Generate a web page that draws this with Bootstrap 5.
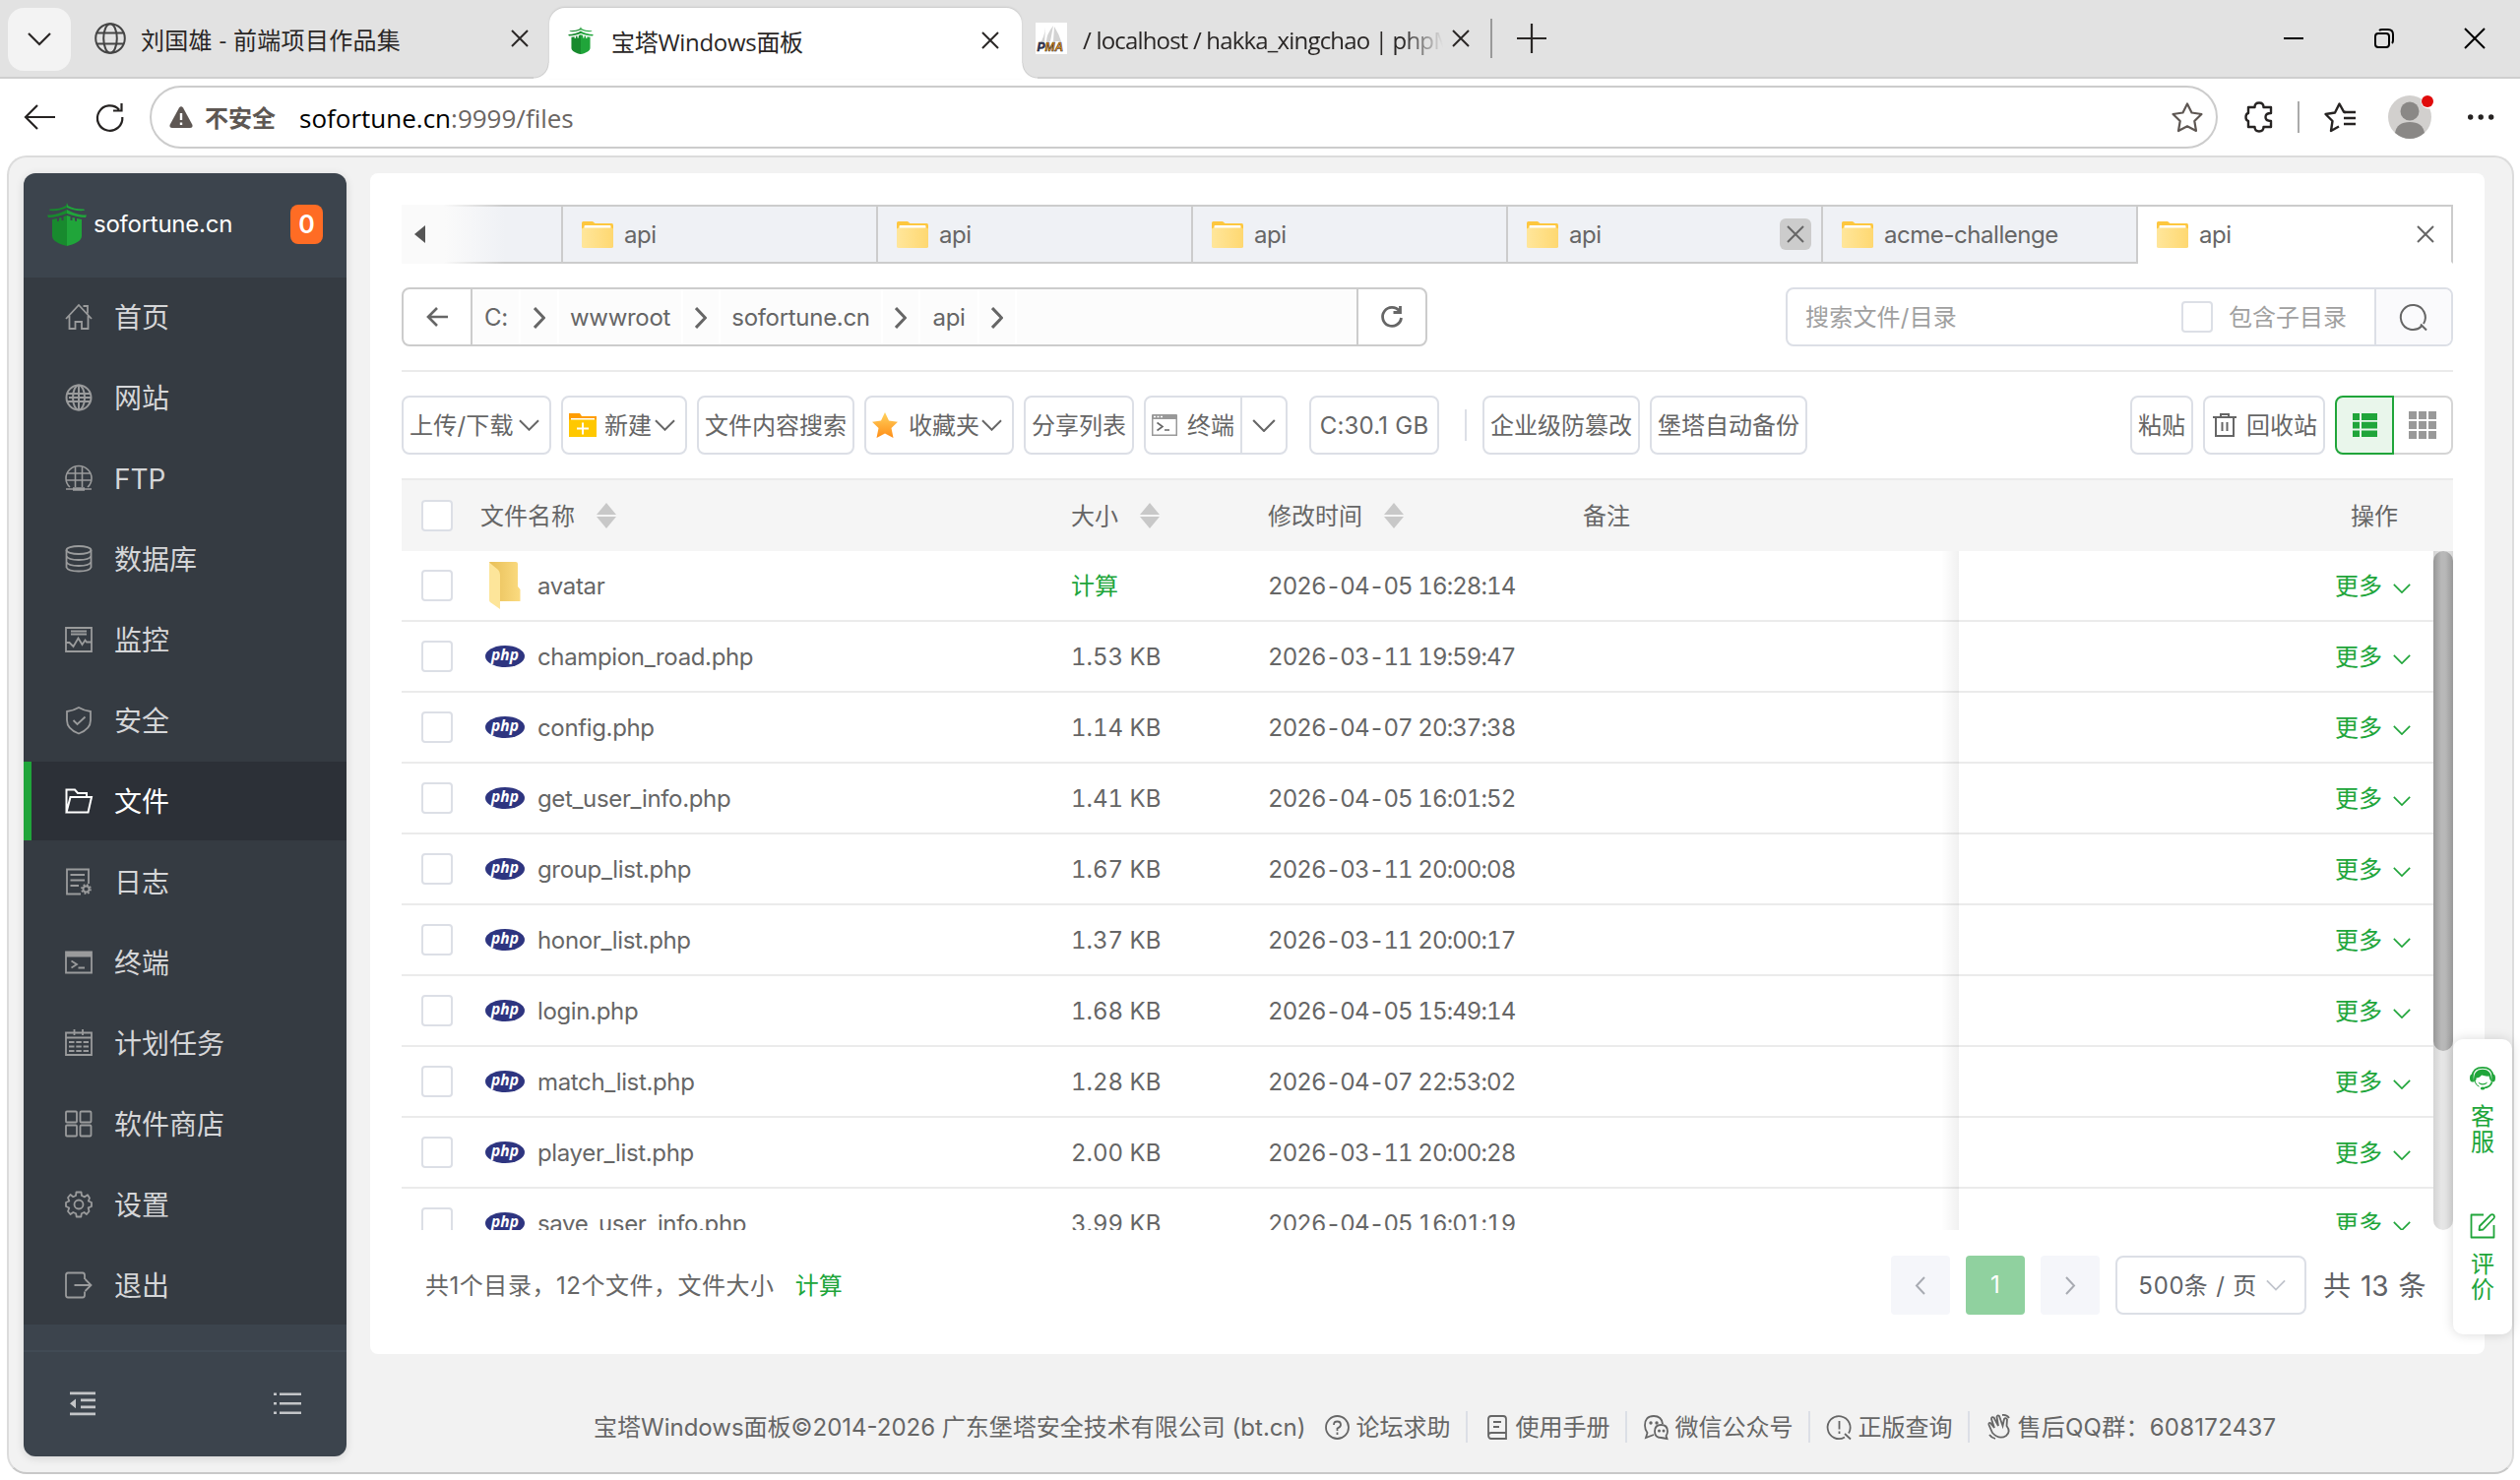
<!DOCTYPE html>
<html lang="zh-CN">
<head>
<meta charset="utf-8">
<title>宝塔Windows面板</title>
<link rel="stylesheet" href="https://cdn.jsdelivr.net/npm/bootstrap@5.3.0/dist/css/bootstrap.min.css">
<style>
:root{--bt-green:#20a53a;--ui:Inter,"Noto Sans CJK SC",sans-serif;--chrome:"Open Sans","Noto Sans CJK SC",sans-serif}
html,body{width:2560px;height:1504px;overflow:hidden;background:#fff}
body{font-family:var(--ui);font-size:24px;line-height:32px;color:#666}
svg{display:block;flex:none;overflow:visible}
.ln{fill:none;stroke:currentColor;stroke-linecap:butt}
.fx{flex:none}
.txt{white-space:nowrap;flex:none;padding-top:2px}
/* browser window */
.strip{height:80px;background:#e2e2e2;font-family:var(--chrome);color:#2a2726}
.strip .txt{padding-top:4px}
.strip .edge{height:80px;border-bottom:2px solid #cfcfcf}
.menu-btn{width:64px;height:64px;background:#f3f3f3;border-radius:16px;margin:8px 24px 0 8px}
.tab-a{width:462px;padding-right:21px}
.tab-a .txt{letter-spacing:.3px;margin-left:15px}
.tab-b{width:480px;height:72px;margin-top:8px;background:#fff;border-radius:16px 16px 0 0;position:relative;padding:0 23px 6px 19px;box-shadow:0 -1px 2px #c8c8c8}
.tab-b .txt{letter-spacing:-.3px;margin-left:18px;padding-top:3px}
.tab-b::before,.tab-b::after{content:"";position:absolute;bottom:0;width:16px;height:16px}
.tab-b::before{left:-16px;background:radial-gradient(circle at 0 0,#e2e2e2 14px,#cfcfcf 15px,#fff 16px)}
.tab-b::after{right:-16px;background:radial-gradient(circle at 100% 0,#e2e2e2 14px,#cfcfcf 15px,#fff 16px)}
.tab-c{width:1522px;padding-left:14px}
.fade-title{width:366px;overflow:hidden;margin-left:16px;letter-spacing:-.82px;-webkit-mask-image:linear-gradient(90deg,#000 325px,transparent 366px);mask-image:linear-gradient(90deg,#000 325px,transparent 366px)}
.tab-sep{width:2px;height:40px;background:#999;margin:0 25px 0 21px}
.winbtns{gap:72px;margin-right:36px;color:#000}
.tbar{height:78px;background:#fff;color:#262322;padding-left:24px}
.addr{width:2101px;height:64px;border:2px solid #ccc;border-radius:32px;padding:0 13px 0 18px;margin-left:26px;font-family:var(--chrome)}
.addr-url{margin-left:24px;font-size:26px;color:#6b6663}
.unsafe{color:#5e5753;font-weight:600;margin-left:12px}
.vbar{width:2px;height:32px;background:#aaa;margin:0 25px}
.page-frame{width:2547px;height:1340px;margin-left:7px;background:#f2f2f2;border:2px solid #dcdcdc;border-bottom-color:#c8c8c8;border-radius:20px;position:relative;padding:16px 0 0 15px}
/* sidebar */
.side{width:328px;height:1304px;background:#3c444d;border-radius:12px;overflow:hidden;box-shadow:0 2px 10px rgba(0,0,0,.12)}
.side-head{height:106px;padding:0 24px 2px;color:#fff}
.side-head .txt{letter-spacing:-.25px;padding:0}
.side-badge{width:33px;height:40px;background:#ff6c24;border-radius:8px;font-weight:600;font-size:25px;color:#fff}
.side-menu{background:#353b42;height:1064px}
.side-menu a{height:80px;margin-bottom:2px;padding:2px 0 0 42px;font-size:28px;color:#d5d6d8;text-decoration:none;gap:22px}
.side-menu svg{color:#9a9b9c;margin-top:-2px}
.side-menu a.on{background:#2c3037;color:#fff;border-left:8px solid var(--bt-green);padding-left:34px}
.side-menu a.on svg{color:#fff}
.side-foot{margin-top:26px;height:108px;border-top:2px solid #414b55;color:#c3c5c8;padding:0 46px 2px 46px}
/* panel */
.panel{width:2148px;height:1200px;background:#fff;border-radius:8px;margin-left:24px;padding:32px 32px 0}
.ftabs{height:60px}
.ftab{width:320px;border:2px solid #ccc;border-left-width:0;background:#eff1f5;padding:0 10px 0 19px}
.ftab .txt{margin-left:11px;letter-spacing:-.45px}
.ftab.first{width:164px;padding-left:13px;background:linear-gradient(90deg,#fafafa 44px,#eff1f5 105px);border-image:linear-gradient(90deg,#fafafa 44px,#ccc 105px) 2}
.ftab.cur{background:#fff;border-bottom-color:transparent}
.xbox{width:32px;height:32px;border-radius:6px;background:#ccc}
.pathbar{width:1042px;height:60px;border:2px solid #ccc;border-radius:8px;overflow:hidden}
.pathbar .seg{height:56px;background:#fcfcfc;border-right:2px solid #fff;letter-spacing:-.3px;padding-top:2px}
.pbtn{width:70px;height:56px}
.search{width:678px;height:60px;border:2px solid #dcdfe6;border-radius:8px;overflow:hidden;color:#a0a0a0;padding-left:18px}
.search .go{width:78px;height:56px;background:#fafafc;border-left:2px solid #dcdfe6;color:#666;margin-left:28px}
.box{width:32px;height:32px;border:2px solid #dcdfe6;border-radius:4px;background:#fff}
.rule{height:2px;background:#ebebeb;margin:24px 0}
.tools{height:60px}
.tb{height:60px;border:2px solid #dcdfe6;border-radius:8px;background:#fff;margin-right:10px;padding:0 6px}
.tline{width:2px;height:32px;background:#dcdfe6;margin:0 16px}
.viewsw{width:60px;height:60px}
.viewsw.l{border:2px solid var(--bt-green);background:#e9f6eb;border-radius:8px 0 0 8px;color:var(--bt-green)}
.viewsw.r{border:2px solid #d5d5d5;border-left:0;border-radius:0 8px 8px 0;color:#999}
.thead-row{height:74px;background:#f5f5f5;border-top:2px solid #ebebeb;margin-top:24px;padding-left:20px}
.sorter{color:#c8c8c8;margin-left:22px}
.scrollbox{height:690px;overflow:hidden}
.rowset{width:2064px}
.frow{height:72px;border-bottom:2px solid #ebebeb;padding-left:20px}
.c-name{width:600px;margin-left:28px}
.c-name .fname{letter-spacing:-.35px}
.c-size{width:200px;font-feature-settings:"tnum"}
.c-time{width:684px;font-feature-settings:"tnum";letter-spacing:-.89px}
.c-shade{width:18px;height:72px;background:linear-gradient(90deg,rgba(0,0,0,0),rgba(0,0,0,.055))}
.c-op{width:482px;padding-right:23px}
.c-op svg{margin:6px 0 0 11px}
.grn{color:var(--bt-green)}
.ico-cell{width:40px;margin:0 13px 0 5px}
.track{width:20px;background:linear-gradient(90deg,#d4d4d4,#e6e6e6 40%,#e6e6e6 60%,#d8d8d8);border-radius:0 0 10px 10px}
.thumb{height:508px;border-radius:10px;background:linear-gradient(90deg,#969696,#b8b8b8 40%,#b8b8b8 60%,#999)}
.foot-row{padding:26px 26px 0 24px}
.summary{letter-spacing:.53px}
.pg{width:60px;height:60px;background:#f5f6fa;border-radius:4px;margin-right:16px;color:#a8abb2}
.pg.on{background:#90d19f;color:#fff}
.psel{width:194px;height:60px;border:2px solid #dcdfe6;border-radius:8px;padding:0 19px 0 21px;color:#606266;word-spacing:2px;font-feature-settings:"tnum"}
.total{font-size:28px;width:106px;margin-left:17px;color:#606266;word-spacing:2px}
.copy{margin-top:54px;padding-left:251px;height:40px}
.copy .sep{width:2px;height:32px;background:#dcdfe6}
.helper{position:absolute;right:0;top:896px;width:60px;height:300px;background:#fff;border-radius:10px;box-shadow:0 0 12px rgba(0,0,0,.15);color:var(--bt-green)}
.helper .w{line-height:26px;width:24px;text-align:center}
</style>
</head>
<body>
<svg width="0" height="0" class="position-absolute">
<defs>
<linearGradient id="gf" x1="0" x2="1"><stop offset="0" stop-color="#ffe69b"/><stop offset="1" stop-color="#fed871"/></linearGradient>
<linearGradient id="gs" x1="0" x2="0" y1="0" y2="1"><stop offset="0" stop-color="#ffd25e"/><stop offset="1" stop-color="#ff8e17"/></linearGradient>
<linearGradient id="gd" x1="0" x2="1"><stop offset="0" stop-color="#e8bf58"/><stop offset="1" stop-color="#fbdb80"/></linearGradient>
<symbol id="x" viewBox="0 0 18 18"><path class="ln" stroke-width="2" d="M1 1 17 17M17 1 1 17"/></symbol>
<symbol id="dn" viewBox="0 0 22 12"><path class="ln" stroke-width="2" d="M1 1 11 11 21 1"/></symbol>
<symbol id="rt" viewBox="0 0 12 22"><path class="ln" stroke-width="3" d="M1 1 10.500 11 1 21"/></symbol>
<symbol id="tower" viewBox="0 0 40 44">
<path fill="#188a2e" d="M20 0V5C15 7.500 9 8.500 2.500 8 2 7.500 2 6.800 3 6.500 9 6.600 15 5.500 19 3ZM20 7V11C14 13 8 15 1 15L0 12.500C8 12.500 14 10.500 20 7ZM5 17 10 16V19L12 18.500V15.500L14.500 15V18H16.500V14L20 13V44C13 42.500 5 39 5 34Z"/>
<path fill="#20a53a" d="M20 0V5C25 7.500 31 8.500 37.500 8 38 7.500 38 6.800 37 6.500 31 6.600 25 5.500 21 3ZM20 7V11C26 13 32 15 39 15L40 12.500C32 12.500 26 10.500 20 7ZM35 17 30 16V19L28 18.500V15.500L25.500 15V18H23.500V14L20 13V44C27 42.500 35 39 35 34Z"/></symbol>
<symbol id="fold" viewBox="0 0 32 27"><path fill="#fdc73f" d="M1.500 0H11L13.500 2H30.500Q32 2 32 4V20H0V1.500Q0 0 1.500 0Z"/><rect x="2.500" y="4" width="27" height="8" rx="1" fill="#fff"/><path fill="url(#gf)" d="M0 8Q0 6.500 2 6.500H30Q32 6.500 32 8V25.500Q32 27 30 27H2Q0 27 0 25.500Z"/></symbol>
<symbol id="bigfold" viewBox="0 0 32 48"><path fill="url(#gd)" d="M0 0H27Q29 0 29 2V25L31.500 28V40H9L6 20Z"/><path fill="#fde59a" d="M0 0.500 9 8Q11 10 11 13V48L1 41Q0 40 0 39Z"/></symbol>
<symbol id="sort" viewBox="0 0 20 26"><path fill="currentColor" d="M10 0 20 12H0ZM0 14H20L10 26Z"/></symbol>
<symbol id="glb" viewBox="0 0 32 32"><g class="ln" stroke-width="2"><circle cx="16" cy="16" r="14.800"/><ellipse cx="16" cy="16" rx="6.800" ry="14.800"/><path d="M3 10.500H29M3 21.500H29"/></g></symbol>
</defs></svg>

<div class="strip d-flex">
  <div class="edge d-flex fx">
    <div class="menu-btn d-flex align-items-center justify-content-center"><svg width="24" height="12"><path class="ln" stroke-width="2.200" d="M1 0 12 11 23 0"/></svg></div>
    <div class="tab-a d-flex align-items-center"><svg width="32" height="32" style="color:#444"><use href="#glb"/></svg><span class="txt me-auto">刘国雄 - 前端项目作品集</span><svg width="18" height="18"><use href="#x"/></svg></div>
  </div>
  <div class="tab-b d-flex align-items-center fx"><svg width="26" height="28"><use href="#tower"/></svg><span class="txt me-auto">宝塔Windows面板</span><svg width="18" height="18"><use href="#x"/></svg></div>
  <div class="edge tab-c d-flex align-items-center fx">
    <svg width="32" height="32"><rect width="32" height="32" fill="#fff"/><path fill="#d3d3d3" d="M10 5Q9 15 4 22H9ZM18 3Q11 12 11 19H15ZM19 4Q24 12 26 19H18Z"/><text x="1.500" y="29" font-family="Liberation Sans" font-weight="700" font-style="italic" font-size="12" fill="#2f3560" stroke="#222" stroke-width=".5">P<tspan fill="#f29111">MA</tspan></text></svg>
    <div class="fade-title txt">/ localhost / hakka_xingchao | phpMyAdmin</div>
    <svg width="18" height="18" style="margin-left:9px"><use href="#x"/></svg>
    <div class="tab-sep"></div>
    <svg width="30" height="30"><path class="ln" stroke-width="2.200" d="M15 0V30M0 15H30"/></svg>
    <div class="winbtns ms-auto d-flex align-items-center">
      <svg width="20" height="2"><path fill="#000" d="M0 0H20V2H0Z"/></svg>
      <svg width="20" height="20"><g class="ln" stroke-width="2"><rect x="1" y="5" width="14" height="14" rx="3"/><path d="M5 2Q6 1 8 1H14Q19 1 19 6V12Q19 14 18 15"/></g></svg>
      <svg width="20" height="20"><path class="ln" stroke-width="2" d="M0 0 20 20M20 0 0 20"/></svg>
    </div>
  </div>
</div>

<div class="tbar d-flex align-items-center">
  <svg width="32" height="26"><path class="ln" stroke-width="2.200" d="M32 13H2M14 1 2 13 14 25"/></svg>
  <svg width="29" height="28" style="margin-left:41px"><path class="ln" stroke-width="2.200" d="M24 6.500A12.700 12.700 0 1 0 27.300 14M26.500 0V7.500H18"/></svg>
  <div class="addr d-flex align-items-center fx">
    <svg width="24" height="22" style="color:#5e5753"><path fill="currentColor" d="M10 1.500Q12-1 14 1.500L23.500 19Q24 22 21 22H3Q0 22 .500 19Z"/><path stroke="#fff" stroke-width="2.400" d="M12 7V14M12 16.500V19"/></svg>
    <span class="txt unsafe">不安全</span>
    <span class="txt addr-url"><span class="text-black">sofortune.cn</span>:9999/files</span>
    <svg class="ms-auto" width="32" height="30" style="color:#5e5753"><path class="ln" stroke-width="2.200" stroke-linejoin="round" d="M16 1.500 20.500 10.500 30.500 12 23.300 19 25 29 16 24.300 7 29 8.700 19 1.500 12 11.500 10.500Z"/></svg>
  </div>
  <svg width="29" height="32" style="margin-left:27px"><path class="ln" stroke-width="2.400" stroke-linejoin="round" d="M4 6H10.500Q10.500 1.500 15 1.500 19.500 1.500 19.500 6H27V12Q21.500 12 21.500 16 21.500 20 27 20V26H19.500Q19.500 30.500 15 30.500 10.500 30.500 10.500 26H4V20Q1.500 19.500 1.500 16 1.500 12.500 4 12Z"/></svg>
  <div class="vbar"></div>
  <svg width="32" height="30"><g class="ln" stroke-width="2.400" stroke-linejoin="round"><path d="M22 10 20 9.700 15.500 1.500 11 10.500 1.500 12 8.500 19 7 29 15 24.500"/><path d="M20 10H32M20 16H32M20 22H32"/></g></svg>
  <svg width="48" height="46" style="margin-left:32px"><circle cx="23" cy="23" r="22" fill="#d2d0ce"/><circle cx="23" cy="17" r="9.500" fill="#8a8886"/><path fill="#8a8886" d="M8 39Q10 28 23 28 36 28 38 39 31 45 23 45 15 45 8 39Z"/><circle cx="42" cy="7" r="7.500" fill="#fff"/><circle cx="41" cy="7" r="6" fill="#e00b0b"/></svg>
  <svg width="28" height="6" style="margin-left:34px"><path fill="currentColor" d="M0 3a2.700 2.700 0 1 0 5.400 0 2.700 2.700 0 1 0-5.400 0M10.500 3a2.700 2.700 0 1 0 5.400 0 2.700 2.700 0 1 0-5.400 0M21 3a2.700 2.700 0 1 0 5.400 0 2.700 2.700 0 1 0-5.400 0"/></svg>
</div>

<div class="page-frame d-flex">
  <nav class="side fx">
    <div class="side-head d-flex align-items-center"><svg width="40" height="44"><use href="#tower"/></svg><span class="txt me-auto" style="margin-left:7px">sofortune.cn</span><span class="side-badge d-flex align-items-center justify-content-center">0</span></div>
    <div class="side-menu">
      <a class="d-flex align-items-center"><svg width="28" height="28"><path class="ln" stroke-width="1.800" d="M1 16 14 2 27 16M18.500 3H23V10.500M4.500 13V26H10.500V19H17V26H23.500V13"/></svg>首页</a>
      <a class="d-flex align-items-center"><svg width="28" height="28"><g class="ln" stroke-width="2"><circle cx="14" cy="14" r="12.500"/><ellipse cx="14" cy="14" rx="6" ry="12.500"/><path d="M14 1V27M2 10H26M2 18H26M4 14H26"/></g></svg>网站</a>
      <a class="d-flex align-items-center"><svg width="28" height="28"><g class="ln" stroke-width="1.600"><path d="M5 23A13 12.500 0 1 1 23 23M10.500 23V2M17.500 23V2M2 9H26M1 16H27M1 25H27"/><path stroke-width="3.500" d="M8 25H20"/></g></svg>FTP</a>
      <a class="d-flex align-items-center"><svg width="28" height="28"><g class="ln" stroke-width="1.800"><ellipse cx="14" cy="5" rx="12.500" ry="4"/><path d="M1.500 5V22.500Q3 26.500 14 26.500 25 26.500 26.500 22.500V5M1.500 11Q3 15 14 15 25 15 26.500 11M1.500 17Q3 21 14 21 25 21 26.500 17"/></g></svg>数据库</a>
      <a class="d-flex align-items-center"><svg width="28" height="28"><g class="ln" stroke-width="1.800"><path d="M1 2H27V26H1ZM6 5.500H22M6 8.500H22"/><path d="M1 17H4.500L8.500 21 13.500 12.500 17.500 19 20.500 14.500 22 16.500H27"/></g></svg>监控</a>
      <a class="d-flex align-items-center"><svg width="28" height="28"><path class="ln" stroke-width="1.800" d="M14 1Q19 4 26 5V14Q26 23 14 27.500 2 23 2 14V5Q9 4 14 1ZM8.500 14 12.500 18 20.500 10.500"/></svg>安全</a>
      <a class="d-flex align-items-center on"><svg width="28" height="28"><path class="ln" stroke-width="2" d="M1.500 25.500V2.500H10L13 6H22V10M1.500 25.500 5.500 10H27L23.500 25.500Z"/></svg>文件</a>
      <a class="d-flex align-items-center"><svg width="28" height="28"><g class="ln" stroke-width="1.800"><path d="M16 26.500H2V1.500H24V16M5.500 7H20M5.500 12.500H20M5.500 18H14"/><circle cx="21.500" cy="21.500" r="3"/><circle cx="21.500" cy="21.500" r="4.500" stroke-dasharray="1.800 1.734"/></g></svg>日志</a>
      <a class="d-flex align-items-center"><svg width="28" height="28"><g class="ln" stroke-width="1.800"><path d="M1 3.500H27V24.500H1Z"/><path stroke-width="5" d="M1 6H27"/><path d="M6.500 12.500 12 16 6.500 19.500M13.500 19.500H20"/></g></svg>终端</a>
      <a class="d-flex align-items-center"><svg width="28" height="28"><g class="ln" stroke-width="1.800"><path d="M1 3.500H27V26H1ZM9.500 0V6M18 0V6M1 8.500H27"/><path stroke-dasharray="5.500 1.800" d="M4 13H24M4 17.500H24M4 22H24"/></g></svg>计划任务</a>
      <a class="d-flex align-items-center"><svg width="28" height="28"><g class="ln" stroke-width="1.800"><rect x="1" y="1.500" width="11" height="11" rx="1"/><rect x="15.500" y="1.500" width="11" height="11" rx="1"/><rect x="1" y="15.500" width="11" height="11" rx="1"/><rect x="15.500" y="15.500" width="11" height="11" rx="1"/></g></svg>软件商店</a>
      <a class="d-flex align-items-center"><svg width="28" height="28"><g class="ln" stroke-width="1.800"><circle cx="14" cy="14" r="4.500"/><path stroke-linejoin="round" d="M11.500 1.500H16.500L17 5 20 6.300 23 4.200 25 7.500 23.800 10.500 27 12V16L23.600 17.300 24.500 21 22 24 19.500 22 16.800 23.300 16.300 26.500H11.700L11.200 23.300 8.300 22 5.500 24 3 21 4.300 17.500 1 16V12L4.300 10.500 3 7 5.500 4 8.300 6.200 11 5Z"/></g></svg>设置</a>
      <a class="d-flex align-items-center"><svg width="28" height="28"><path class="ln" stroke-width="1.800" d="M20 8V4Q20 1.500 18 1.500H3Q1 1.500 1 4V24Q1 26.500 3 26.500H18Q20 26.500 20 24V20.500M9.500 14H26M20.500 8 26.500 14 20.500 20"/></svg>退出</a>
    </div>
    <div class="side-foot d-flex align-items-center justify-content-between">
      <svg width="28" height="26"><path fill="currentColor" d="M1 1.500H27V4.200H1ZM12 8.500H27V11.200H12ZM12 15.500H27V18.200H12ZM1 22.500H27V25.200H1ZM1 13.300 7 8.500V18.200Z"/></svg>
      <svg width="28" height="24"><path fill="currentColor" d="M0 1.500H3V4H0ZM6 1.500H28V4H6ZM0 11H3V13.500H0ZM6 11H28V13.500H6ZM0 20.500H3V23H0ZM6 20.500H28V23H6Z"/></svg>
    </div>
  </nav>

  <div class="fx">
  <main class="panel">
    <div class="ftabs d-flex">
      <div class="ftab first d-flex align-items-center fx"><svg width="11" height="18"><path fill="#555" d="M11 0V18L0 9Z"/></svg></div>
      <div class="ftab d-flex align-items-center fx"><svg width="32" height="27"><use href="#fold"/></svg><span class="txt">api</span></div>
      <div class="ftab d-flex align-items-center fx"><svg width="32" height="27"><use href="#fold"/></svg><span class="txt">api</span></div>
      <div class="ftab d-flex align-items-center fx"><svg width="32" height="27"><use href="#fold"/></svg><span class="txt">api</span></div>
      <div class="ftab d-flex align-items-center fx"><svg width="32" height="27"><use href="#fold"/></svg><span class="txt me-auto">api</span><span class="xbox d-flex align-items-center justify-content-center"><svg width="18" height="18"><use href="#x"/></svg></span></div>
      <div class="ftab d-flex align-items-center fx"><svg width="32" height="27"><use href="#fold"/></svg><span class="txt">acme-challenge</span></div>
      <div class="ftab cur d-flex align-items-center fx"><svg width="32" height="27"><use href="#fold"/></svg><span class="txt me-auto">api</span><svg width="18" height="18" style="margin-right:7px"><use href="#x"/></svg></div>
    </div>

    <div class="d-flex justify-content-between" style="margin-top:24px">
      <div class="pathbar d-flex align-items-center">
        <div class="pbtn d-flex align-items-center justify-content-center fx" style="border-right:2px solid #ccc"><svg width="22" height="20"><path class="ln" stroke-width="2.600" d="M22 10H2M11 1 2 10 11 19"/></svg></div>
        <div class="seg fx d-flex align-items-center" style="width:49px;padding-left:12px">C:</div>
        <div class="seg fx d-flex align-items-center justify-content-center" style="width:39px"><svg width="12" height="22"><use href="#rt"/></svg></div>
        <div class="seg fx d-flex align-items-center justify-content-center" style="width:126px">wwwroot</div>
        <div class="seg fx d-flex align-items-center justify-content-center" style="width:38px"><svg width="12" height="22"><use href="#rt"/></svg></div>
        <div class="seg fx d-flex align-items-center justify-content-center" style="width:165px">sofortune.cn</div>
        <div class="seg fx d-flex align-items-center justify-content-center" style="width:38px"><svg width="12" height="22"><use href="#rt"/></svg></div>
        <div class="seg fx d-flex align-items-center justify-content-center" style="width:60px">api</div>
        <div class="seg fx d-flex align-items-center justify-content-center" style="width:38px"><svg width="12" height="22"><use href="#rt"/></svg></div>
        <div class="seg flex-grow-1 border-0"></div>
        <div class="pbtn d-flex align-items-center justify-content-center fx" style="border-left:2px solid #ccc"><svg width="24" height="24"><path class="ln" stroke-width="2.800" d="M19.500 6A9.500 9.500 0 1 0 21.500 13M20.500 1V7.500H13.500"/></svg></div>
      </div>
      <div class="search d-flex align-items-center">
        <span class="txt me-auto" style="letter-spacing:.2px">搜索文件/目录</span>
        <span class="box fx"></span><span class="txt" style="margin-left:16px">包含子目录</span>
        <div class="go d-flex align-items-center justify-content-center fx"><svg width="28" height="28"><path class="ln" stroke-width="2" d="M22 23.500A12.500 12.500 0 1 1 24 21M21 21.500 27 27.500"/></svg></div>
      </div>
    </div>
    <div class="rule"></div>

    <div class="tools d-flex align-items-center">
      <div class="tb fx d-flex align-items-center" style="width:152px"><span class="txt" style="letter-spacing:.2px">上传/下载</span><svg width="21" height="12" style="margin-left:5px"><use href="#dn"/></svg></div>
      <div class="tb fx d-flex align-items-center" style="width:128px"><svg width="28" height="24"><path fill="#ff9d00" d="M0 0H11L13 3H28V9H0Z"/><path fill="#fff" d="M2 5H26V7H2Z"/><path fill="#ffc800" d="M0 6.500H28V24H0Z"/><path stroke="#fff" stroke-width="2" d="M14 9.500V21.500M8 15.500H20"/></svg><span class="txt" style="margin-left:8px">新建</span><svg width="21" height="12" style="margin-left:3px"><use href="#dn"/></svg></div>
      <div class="tb fx d-flex align-items-center" style="width:160px"><span class="txt">文件内容搜索</span></div>
      <div class="tb fx d-flex align-items-center" style="width:152px"><svg width="26" height="26"><path fill="url(#gs)" d="M13 0 17 8.500 26 9.800 19.500 16 21.500 26 13 21.500 4.500 26 6.500 16 0 9.800 9 8.500Z"/></svg><span class="txt" style="margin-left:11px">收藏夹</span><svg width="21" height="12" style="margin-left:2px"><use href="#dn"/></svg></div>
      <div class="tb fx d-flex align-items-center" style="width:112px"><span class="txt">分享列表</span></div>
      <div class="tb fx d-flex align-items-center" style="width:146px;margin-right:22px"><svg width="26" height="22"><path fill="#999" d="M0 1Q0 0 1 0H25Q26 0 26 1V22H0ZM1.500 5V20.500H24.500V5Z" fill-rule="evenodd"/><path class="ln" stroke="#999" stroke-width="1.600" d="M5.500 8.500 11 12.500 5.500 16.500M13 16H18"/><path stroke="#fff" stroke-width="1.500" d="M2 2.500H4M5.500 2.500H7.500M9 2.500H11"/></svg><span class="txt" style="margin:0 6px 0 10px">终端</span><div style="width:2px;height:56px;background:#dcdfe6"></div><svg width="24" height="13" style="margin-left:10px"><use href="#dn"/></svg></div>
      <div class="tb fx d-flex align-items-center justify-content-center" style="width:132px;padding:0"><span class="txt" style="letter-spacing:.2px">C:30.1 GB</span></div>
      <div class="tline"></div>
      <div class="tb fx d-flex align-items-center" style="width:160px"><span class="txt">企业级防篡改</span></div>
      <div class="tb fx d-flex align-items-center" style="width:160px"><span class="txt">堡塔自动备份</span></div>
      <div class="tb fx d-flex align-items-center ms-auto" style="width:64px"><span class="txt">粘贴</span></div>
      <div class="tb fx d-flex align-items-center" style="width:124px;padding-left:8px"><svg width="24" height="24"><path class="ln" stroke-width="2" d="M0 4H24M8 4V1H16V4M3 4V23H21V4M9.500 9V18M14.500 9V18"/></svg><span class="txt" style="margin-left:10px">回收站</span></div>
      <div class="viewsw l d-flex align-items-center justify-content-center fx"><svg width="25" height="24"><path fill="currentColor" d="M0 0H7V7H0ZM9 0H25V7H9ZM0 8.700H7V15.500H0ZM9 8.700H25V15.500H9ZM0 17.500H7V24H0ZM9 17.500H25V24H9Z"/></svg></div>
      <div class="viewsw r d-flex align-items-center justify-content-center fx"><svg width="28" height="28"><path fill="currentColor" d="M0 0H8V8H0ZM10 0H18V8H10ZM20 0H28V8H20ZM0 10H8V18H0ZM10 10H18V18H10ZM20 10H28V18H20ZM0 20H8V28H0ZM10 20H18V28H10ZM20 20H28V28H20Z"/></svg></div>
    </div>

    <div class="thead-row d-flex align-items-center">
      <span class="box fx"></span>
      <div class="c-name fx d-flex align-items-center"><span class="txt">文件名称</span><svg class="sorter" width="20" height="26"><use href="#sort"/></svg></div>
      <div class="c-size fx d-flex align-items-center"><span class="txt">大小</span><svg class="sorter" width="20" height="26"><use href="#sort"/></svg></div>
      <div class="fx d-flex align-items-center" style="width:320px"><span class="txt">修改时间</span><svg class="sorter" width="20" height="26"><use href="#sort"/></svg></div>
      <span class="txt">备注</span><span class="txt ms-auto" style="margin-right:56px">操作</span>
    </div>
    <div class="scrollbox d-flex">
      <div class="rowset fx" id="rows"></div>
      <div class="track fx"><div class="thumb"></div></div>
    </div>

    <div class="foot-row d-flex align-items-center">
      <span class="txt summary">共1个目录，12个文件，文件大小</span><span class="txt grn me-auto" style="margin-left:21px">计算</span>
      <div class="pg fx d-flex align-items-center justify-content-center"><svg width="10" height="19"><path class="ln" stroke-width="2" d="M9 1 1 9.500 9 18"/></svg></div>
      <div class="pg on fx d-flex align-items-center justify-content-center">1</div>
      <div class="pg fx d-flex align-items-center justify-content-center"><svg width="10" height="19"><path class="ln" stroke-width="2" d="M1 1 9 9.500 1 18"/></svg></div>
      <div class="psel fx d-flex align-items-center justify-content-between"><span class="txt">500条 / 页</span><svg width="20" height="12" style="color:#c0c4cc"><use href="#dn"/></svg></div>
      <span class="txt total">共 13 条</span>
    </div>
  </main>
  <footer class="copy d-flex align-items-center">
    <span class="txt">宝塔Windows面板©2014-2026 广东堡塔安全技术有限公司 (bt.cn)</span>
    <svg width="25" height="25" style="margin:0 6px 0 20px"><g class="ln" stroke-width="1.800"><circle cx="12.500" cy="12.500" r="11.500"/><path d="M9 10Q9 6.500 12.500 6.500 16 6.500 16 10 16 12 12.500 13.500V16M12.500 17.500V20"/></g></svg><span class="txt">论坛求助</span>
    <div class="sep" style="margin:0 20px 0 16px"></div>
    <svg width="20" height="25" style="margin-right:8px"><path class="ln" stroke-width="1.800" d="M1 20V4Q1 1 4 1H16Q19 1 19 4V24H4Q1 24 1 20.500 1 18 4 18H19M6 7H14M6 12H12"/></svg><span class="txt">使用手册</span>
    <div class="sep" style="margin:0 17px 0 16px"></div>
    <svg width="25" height="25" style="margin-right:6px"><g class="ln" stroke-width="1.800"><path d="M10 20 2 23 3.500 18Q1 15 1 10.500 1 1 10 1 18 1 19 9"/><path d="M17.500 10Q24 10 24 16.500 24 19 22.500 21L23.500 24 17.500 23Q11 23 11 16.500 11 10 17.500 10Z"/></g><g fill="currentColor"><circle cx="7" cy="8" r="1.700"/><circle cx="13" cy="8" r="1.700"/><circle cx="15.500" cy="16" r="1.500"/><circle cx="20" cy="16" r="1.500"/></g></svg><span class="txt">微信公众号</span>
    <div class="sep" style="margin:0 17px 0 16px"></div>
    <svg width="25" height="25" style="margin-right:6px"><path class="ln" stroke-width="1.800" d="M18 22.500A11.500 11.500 0 1 1 22 18.500M18 19 24 24.500M12.500 6V14.500M12.500 16.500V19"/></svg><span class="txt">正版查询</span>
    <div class="sep" style="margin:0 18px 0 16px"></div>
    <svg width="24" height="26" style="margin-right:6px"><path class="ln" stroke-width="1.800" d="M5 19 1.500 11Q1 8.500 3 9L7 14 4 5Q4 2.500 6.500 3.500L11 12 9.500 3Q10 .500 12 2L15.500 12 17 5Q18.500 3 20 5.500L19.500 12Q24 18 19 22 12 26.500 5 19ZM15 1Q20 .500 22 4M2 21Q4 24 8 25"/></svg><span class="txt" style="letter-spacing:.25px">售后QQ群：608172437</span>
  </footer>
  </div>

  <aside class="helper d-flex flex-column align-items-center">
    <svg width="26" height="24" style="margin-top:28px"><path class="ln" stroke-width="1.600" d="M2.500 10Q3 .900 13 .900 23 .900 23.500 10M22.500 15.500Q21.500 20.500 14 21.800"/><path fill="currentColor" d="M3.500 7.500H2Q0 8 0 11.500 0 15.500 2.500 15.500H4ZM22.500 7.500H24Q26 8 26 11.500 26 15.500 23.500 15.500H22ZM4.200 15.500Q3 3 13 2.800 23 3 21.800 15.500 19.500 12 19.500 9.500 16 10 12 8.500 10 11.500 6.500 11.500 7 14 4.200 15.500ZM8.500 15.500Q13 19 18 15.500 17 18.500 13 18.500 9.500 18.500 8.500 15.500Z"/><ellipse cx="13" cy="22" rx="2.200" ry="1.500" fill="currentColor"/><path class="ln" stroke-width="1" d="M5 14.500Q6 19 9.500 20.200"/></svg>
    <span class="w" style="margin-top:14px">客服</span>
    <svg width="26" height="26" style="margin-top:59px"><path class="ln" stroke-width="1.800" stroke-linejoin="round" d="M14 1.500H1.500V24.500H24.500V12M9.500 17 10 13 21 1.800Q23 .500 24.500 2 25.500 3.500 24.500 5L13.500 16.500Z"/></svg>
    <span class="w" style="margin-top:13px">评价</span>
  </aside>
</div>

<script>
const files = [
  ["avatar","计算","2026-04-05 16:28:14"],
  ["champion_road.php","1.53 KB","2026-03-11 19:59:47"],
  ["config.php","1.14 KB","2026-04-07 20:37:38"],
  ["get_user_info.php","1.41 KB","2026-04-05 16:01:52"],
  ["group_list.php","1.67 KB","2026-03-11 20:00:08"],
  ["honor_list.php","1.37 KB","2026-03-11 20:00:17"],
  ["login.php","1.68 KB","2026-04-05 15:49:14"],
  ["match_list.php","1.28 KB","2026-04-07 22:53:02"],
  ["player_list.php","2.00 KB","2026-03-11 20:00:28"],
  ["save_user_info.php","3.99 KB","2026-04-05 16:01:19"]
];
const php = '<svg width="40" height="22"><ellipse cx="20" cy="11" rx="20" ry="11" fill="#2e3580"/><text x="20" y="15" text-anchor="middle" font-family="Open Sans" font-weight="700" font-style="italic" font-size="15.500" fill="#fff">php</text></svg>';
const dir = '<svg width="32" height="48" class="mx-auto"><use href="#bigfold"/></svg>';
document.getElementById("rows").innerHTML = files.map(([n, s, t], i) =>
  `<div class="frow d-flex align-items-center"><span class="box fx"></span>
   <div class="c-name fx d-flex align-items-center"><span class="ico-cell">${i ? php : dir}</span><span class="txt fname">${n}</span></div>
   <div class="c-size fx txt${i ? "" : " grn"}">${s}</div><div class="c-time fx txt">${t}</div><div class="c-shade fx"></div>
   <div class="c-op fx d-flex align-items-center justify-content-end grn"><span class="txt">更多</span><svg width="18" height="10"><use href="#dn"/></svg></div></div>`).join("");
</script>
<script src="https://cdn.jsdelivr.net/npm/bootstrap@5.3.0/dist/js/bootstrap.bundle.min.js"></script>
</body>
</html>
